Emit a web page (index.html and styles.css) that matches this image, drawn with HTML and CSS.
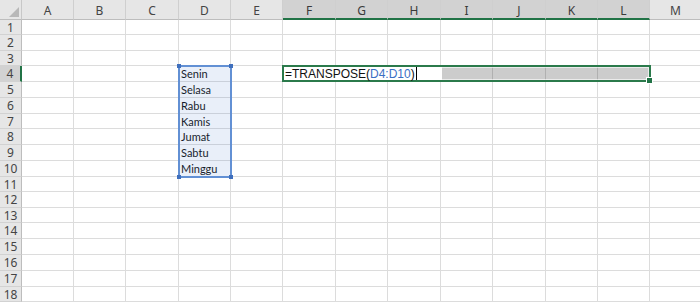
FILE: index.html
```html
<!DOCTYPE html>
<html lang="id">
<head>
    <meta charset="UTF-8">
    <title>TRANSPOSE</title>
    <link rel="stylesheet" href="styles.css">
</head>
<body>

    <div class="sheet" id="sheet">
        <div class="range">
            <span class="h tl"></span><span class="h tr"></span>
            <span class="h bl"></span><span class="h br"></span>
        </div>
        <div class="sel">
            <div class="editor">=TRANSPOSE(<span class="ref">D4:D10</span>)<span class="caret"></span></div>
            <div class="rest"></div>
        </div>
    </div>

    <script>
        const cols = ["A", "B", "C", "D", "E", "F", "G", "H", "I", "J", "K", "L", "M"];
        const rows = 18;
        const data = {
            D4: "Senin", D5: "Selasa", D6: "Rabu", D7: "Kamis",
            D8: "Jumat", D9: "Sabtu", D10: "Minggu"
        };
        const selCols = ["F", "G", "H", "I", "J", "K", "L"];
        const selRow = 4;

        const sheet = document.getElementById("sheet");
        const first = sheet.firstElementChild;

        function add(cls, text) {
            const el = document.createElement("div");
            el.className = cls;
            if (text) el.textContent = text;
            sheet.insertBefore(el, first);
        }

        add("corner");
        cols.forEach(c => add(selCols.includes(c) ? "colhead on" : "colhead", c));

        for (let r = 1; r <= rows; r++) {
            add(r === selRow ? "rowhead on" : "rowhead", r);
            cols.forEach(c => add("cell", data[c + r]));
        }
    </script>

</body>
</html>
```

FILE: styles.css
```css
body {
    margin: 0;
    background: #fff;
    overflow: hidden;
}

/* grille */
.sheet {
    display: grid;
    grid-template-columns: 22px 52px 52px 53px 52px 52px 53px 52px 53px 52px 53px 52px 52px 52px;
    grid-template-rows: 20px 15px 16px 15px 16px 16px 16px 15px 16px 16px 16px 15px 16px 15px 16px 16px 16px 16px 15px;
    width: 702px;
    height: 302px;
    overflow: hidden;
    position: relative;
}

.sheet > div {
    box-sizing: border-box;
}

.corner {
    background: #e6e6e6;
    border-right: 1px solid #c8c8c8;
    border-bottom: 1px solid #bdbdbd;
    display: flex;
    justify-content: flex-end;
    align-items: flex-end;
    padding: 0 2px 2px 0;
}

.corner::after {
    content: "";
    border-style: solid;
    border-width: 0 0 10px 10px;
    border-color: transparent transparent #b8b8b8 transparent;
}

.colhead,
.rowhead {
    background: #e6e6e6;
    font-family: "Noto Sans", sans-serif;
    font-size: 12px;
    color: #444;
    display: flex;
    align-items: center;
    justify-content: center;
}

.colhead {
    border-right: 1px solid #cfcfcf;
    border-bottom: 1px solid #bdbdbd;
    padding-top: 2px;
}

.rowhead {
    border-right: 1px solid #bdbdbd;
    border-bottom: 1px solid #d2d2d2;
}

.colhead.on {
    background: #d2d2d2;
    border-bottom: 2px solid #217346;
    color: #3a3a3a;
}

.rowhead.on {
    background: #d2d2d2;
    border-right: 2px solid #217346;
}

.cell {
    border-right: 1px solid #dcdcdc;
    border-bottom: 1px solid #dcdcdc;
    font-family: Lato, "Open Sans", sans-serif;
    font-size: 11px;
    color: #111;
    padding-left: 2px;
    display: flex;
    align-items: center;
    white-space: nowrap;
}

/* plage D4:D10 */
.range {
    grid-column: 5 / 6;
    grid-row: 5 / 12;
    position: absolute;
    top: -1px;
    left: -1px;
    right: -1px;
    bottom: -1px;
    border: 2px solid #6290d4;
    background: rgba(70, 125, 205, 0.12);
    z-index: 2;
}

.h {
    position: absolute;
    width: 4px;
    height: 4px;
    background: #3f6fbd;
}

.h.tl { left: -3px; top: -3px; }
.h.tr { right: -3px; top: -3px; }
.h.bl { left: -3px; bottom: -3px; }
.h.br { right: -3px; bottom: -3px; }

/* sélection F4:L4 */
.sel {
    grid-column: 7 / 14;
    grid-row: 5 / 6;
    position: absolute;
    top: -1px;
    left: -1px;
    right: -1px;
    bottom: 0;
    border: 2px solid #2b7a4b;
    display: flex;
    z-index: 3;
}

.sel::after {
    content: "";
    position: absolute;
    right: -4px;
    bottom: -4px;
    width: 5px;
    height: 5px;
    background: #217346;
    border: 1px solid #fff;
}

.editor {
    width: 157px;
    background: #fff;
    font-family: "Liberation Sans", Arial, sans-serif;
    font-size: 12px;
    color: #111;
    padding-left: 1px;
    display: flex;
    align-items: center;
    white-space: nowrap;
}

.ref {
    color: #3a6fc4;
}

.caret {
    display: inline-block;
    width: 0;
    height: 13px;
    border-left: 1px solid #000;
    margin-left: 1px;
}

.rest {
    flex: 1;
    background: rgba(0, 0, 0, 0.2);
    border: 1px solid rgba(255, 255, 255, 0.6);
    border-left: none;
}
```
